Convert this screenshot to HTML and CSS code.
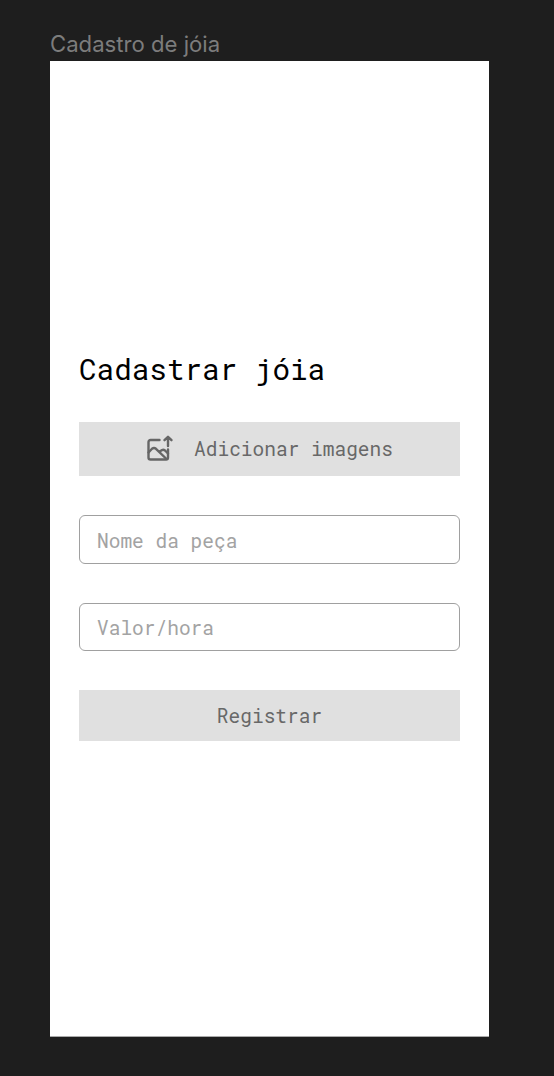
FILE: index.html
```html
<!DOCTYPE html>
<html lang="pt-BR">
<head>
<meta charset="utf-8">
<title>Cadastro de jóia</title>
<link rel="stylesheet" href="styles.css">
</head>
<body>
<div class="frame-label">Cadastro de jóia</div>
<main class="frame">
  <h1 class="title">Cadastrar jóia</h1>
  <form class="form">
    <button type="button" class="button button-upload">
      <svg class="icon" viewBox="0 0 28 28" fill="none" stroke="#666" stroke-width="2.4" stroke-linecap="round" stroke-linejoin="round">
        <path d="M13.500 5H4.500A2 2 0 0 0 2.500 7V22.500A2 2 0 0 0 4.500 24.500H20A2 2 0 0 0 22 22.500V14.500"/>
        <path d="M2.500 17.500L6 13.800Q8 12.300 10 13.800L20.500 24M13.500 17Q16.500 13.500 19 15.500L22 18.500"/>
        <path d="M22 11V2M18.500 5.200L22 1.800L25.500 5.200"/>
      </svg>
      <span>Adicionar imagens</span>
    </button>
    <input class="field" placeholder="Nome da peça">
    <input class="field" placeholder="Valor/hora">
    <button type="button" class="button button-submit"><span>Registrar</span></button>
  </form>
</main>
</body>
</html>
```
FILE: styles.css
```css
* { box-sizing: border-box; }
body { margin: 0; padding: 31px 65px 39px 50px; height: 1076px; background: #1e1e1e; overflow: hidden; }
.frame-label { height: 30px; font: 22.15px/27px Inter, sans-serif; color: #7c7c7c; }
.frame { height: 976px; padding: 289px 29px 0; background: #fff; border-bottom: 1px solid #aaa; }
.title { margin: 0; height: 72px; font: 400 29.3px/38px "Roboto Mono", "DejaVu Sans Mono", monospace; color: #000; }
.form { display: flex; flex-direction: column; }
.button, .field { width: 381px; font: 400 19.5px/26px "Roboto Mono", "DejaVu Sans Mono", monospace; }
.button { display: flex; align-items: center; justify-content: center; border: 0; padding: 0; color: #686868; background: #e0e0e0; }
.button-upload { height: 54px; gap: 20px; margin-bottom: 39px; }
.button-submit { height: 51px; }
.icon { width: 28px; height: 28px; }
.field { height: 48.5px; margin: 0 0 39px; padding: 2px 17px 0; border: 1px solid #a0a0a0; border-radius: 6px; background: #fff; }
.field::placeholder { color: #a3a3a3; opacity: 1; }
```
